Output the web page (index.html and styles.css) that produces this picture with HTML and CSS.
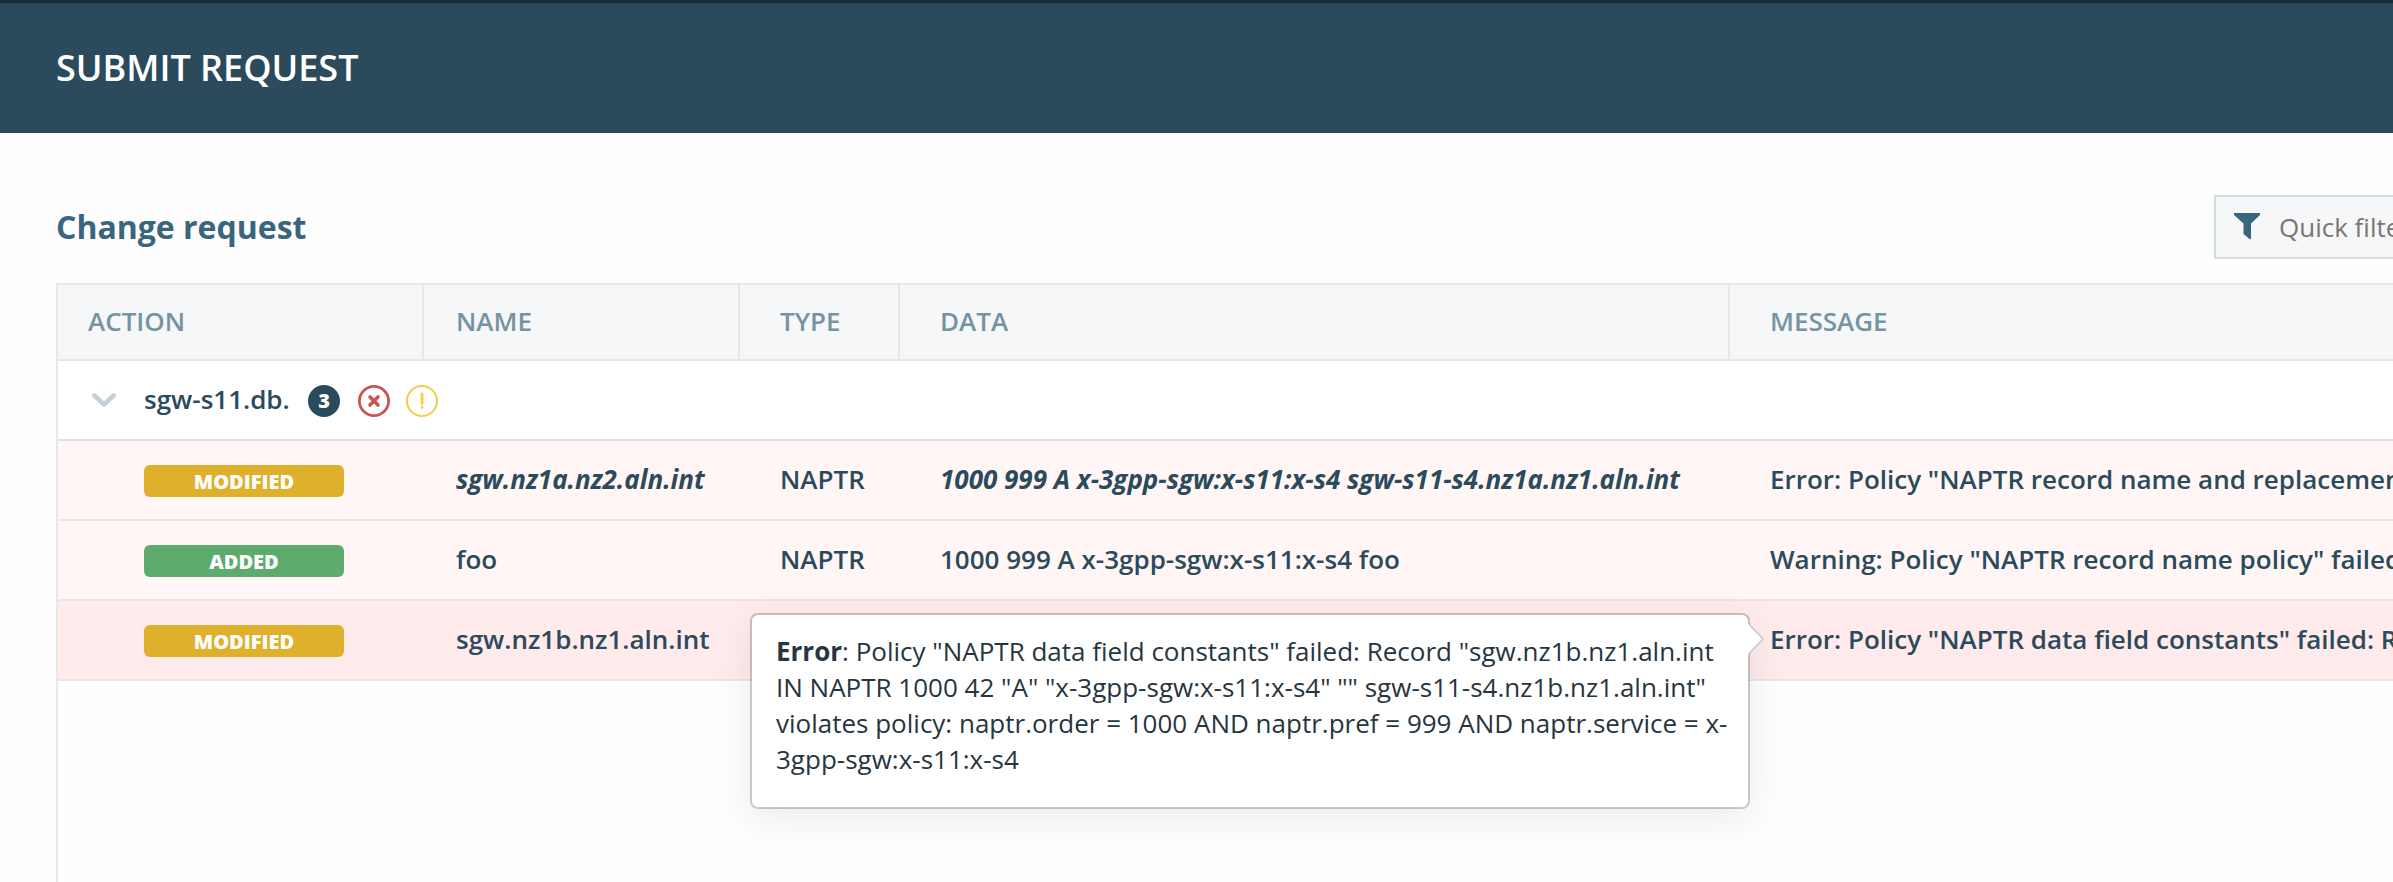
FILE: index.html
```html
<!DOCTYPE html>
<html lang="en">
<head>
<meta charset="utf-8">
<title>Submit request</title>
<link rel="stylesheet" href="styles.css">
</head>
<body>
<header class="topbar"><h1 class="topbar-title">SUBMIT REQUEST</h1></header>
<main class="content">
  <div class="toolbar">
    <h2 class="section-title">Change request</h2>
    <div class="filter">
      <svg class="filter-icon" viewBox="0 0 26 26"><path d="M0 0H26V2L17 10.5V26H15.5L9.5 21V10.5L0 2Z" fill="#3a667d"/></svg>
      <span class="filter-text">Quick filter</span>
    </div>
  </div>
  <div class="table">
    <div class="row head">
      <div class="cell first">ACTION</div><div class="cell name">NAME</div><div class="cell">TYPE</div><div class="cell">DATA</div><div class="cell">MESSAGE</div>
    </div>
    <div class="group">
      <svg class="chevron" viewBox="0 0 24 14"><path d="M2.3 2.5L12 11.5L21.7 2.5" fill="none" stroke="#c3d0d7" stroke-width="4.6" stroke-linecap="round"/></svg>
      <span class="group-name">sgw-s11.db.</span>
      <span class="count">3</span>
      <svg class="status error" viewBox="0 0 32 32" fill="none" stroke="#cc5353"><circle cx="16" cy="16" r="14.6" stroke-width="2.8"/><path d="M12 12L20 20M20 12L12 20" stroke-width="3.6" stroke-linecap="round"/></svg>
      <svg class="status warn" viewBox="0 0 32 32" fill="none" stroke="#f5cb47"><circle cx="16" cy="16" r="15" stroke-width="2"/><path d="M16 9V18.5M16 22.2V22.6" stroke-width="2.8" stroke-linecap="round"/></svg>
    </div>
    <div class="row failed">
      <div class="cell badge-cell"><span class="badge modified">MODIFIED</span></div><div class="cell name changed">sgw.nz1a.nz2.aln.int</div><div class="cell">NAPTR</div><div class="cell changed">1000 999 A x-3gpp-sgw:x-s11:x-s4 sgw-s11-s4.nz1a.nz1.aln.int</div><div class="cell">Error: Policy "NAPTR record name and replacement"</div>
    </div>
    <div class="row failed">
      <div class="cell badge-cell"><span class="badge added">ADDED</span></div><div class="cell name">foo</div><div class="cell">NAPTR</div><div class="cell">1000 999 A x-3gpp-sgw:x-s11:x-s4 foo</div><div class="cell">Warning: Policy "NAPTR record name policy" failed</div>
    </div>
    <div class="row failed hovered">
      <div class="cell badge-cell"><span class="badge modified">MODIFIED</span></div><div class="cell name">sgw.nz1b.nz1.aln.int</div><div class="cell"></div><div class="cell"></div>
      <div class="cell">Error: Policy "NAPTR data field constants" failed: Record</div>
      <div class="tooltip"><b>Error</b>: Policy "NAPTR data field constants" failed: Record "sgw.nz1b.nz1.aln.int<br>IN NAPTR 1000 42 "A" "x-3gpp-sgw:x-s11:x-s4" "" sgw-s11-s4.nz1b.nz1.aln.int"<br>violates policy: naptr.order = 1000 AND naptr.pref = 999 AND naptr.service = x-<br>3gpp-sgw:x-s11:x-s4
        <svg class="arrow" viewBox="0 0 16 30"><path d="M0 0H1L15 15L1 30H0Z" fill="#fff"/><path d="M1 .5L15 15L1 29.5" fill="none" stroke="#000" stroke-opacity=".2" stroke-width="1.5"/></svg>
      </div>
    </div>
  </div>
</main>
</body>
</html>
```

FILE: styles.css
```css
* { box-sizing: border-box; }
body {
  margin: 0;
  height: 882px;
  overflow: hidden;
  display: flex;
  flex-direction: column;
  background: #fefefe;
  color: #2b4a5b;
  font: 600 26px/36px "Open Sans", sans-serif;
}
.topbar {
  height: 133px;
  flex: none;
  display: flex;
  align-items: center;
  padding-left: 56px;
  border-top: 3px solid #1b2b33;
  background: #2b4a5b;
}
.topbar-title { margin: 0; font-size: 36px; font-weight: 600; color: #fff; }
.content { flex: 1; display: flex; flex-direction: column; padding: 62px 0 0 56px; }
.toolbar { height: 64px; display: flex; justify-content: space-between; align-items: center; margin-bottom: 24px; }
.section-title { margin: 0; font-size: 32px; font-weight: 700; color: #3a667d; }
.filter {
  width: 179px;
  height: 64px;
  display: flex;
  align-items: center;
  padding-left: 18px;
  border: 2px solid #d2dce1;
  border-right: 0;
  background: #f5f7f9;
  overflow: hidden;
  white-space: nowrap;
}
.filter-icon { width: 26px; height: 26px; flex: none; margin: 0 19px 2px 0; }
.filter-text { font-weight: 400; color: #777; }
.table { flex: 1; border: solid #e6e8e8; border-width: 2px 0 0 2px; }
.row {
  position: relative;
  display: grid;
  grid-template-columns: 366px 316px 160px 830px 1fr;
  height: 80px;
  border-bottom: 2px solid #e6e8e8;
}
.cell { display: flex; align-items: center; min-width: 0; padding-left: 40px; padding-bottom: 2px; white-space: nowrap; }
.cell.name { padding-left: 32px; }
.head { height: 76px; background: #f5f7f8; color: #7594a3; }
.head .cell { border-right: 2px solid #e6e8e8; }
.head .cell:last-child { border-right: 0; }
.cell.first { padding-left: 30px; }
.group { height: 80px; display: flex; align-items: center; padding-left: 34px; border-bottom: 2px solid #d9e2e7; background: #fff; white-space: nowrap; }
.chevron { width: 24px; height: 14px; margin-right: 28px; }
.group-name { width: 144px; margin-right: 20px; padding-bottom: 2px; }
.count {
  width: 32px;
  height: 32px;
  margin-top: 1px;
  border-radius: 50%;
  background: #2b4a5b;
  color: #fff;
  font: 800 20px/32px "Open Sans", sans-serif;
  text-align: center;
}
.status { width: 32px; height: 32px; margin: 1px 0 0 18px; }
.status.warn { margin-left: 16px; }
.failed { background: #fff6f5; }
.hovered { background: #ffebeb; }
.changed { font-weight: 700; font-style: italic; }
.cell.badge-cell { padding: 2px 0 0 86px; }
.badge { width: 200px; height: 32px; border-radius: 6px; color: #fff; font: 800 20px/33px "Open Sans", sans-serif; text-align: center; }
.badge.modified { background: #deb02b; }
.badge.added { background: #5dac6e; }
.tooltip {
  position: absolute;
  left: 692px;
  top: 12px;
  width: 1000px;
  height: 196px;
  padding: 18px 24px;
  border: 2px solid rgba(0, 0, 0, .2);
  border-radius: 8px;
  background: #fff;
  background-clip: padding-box;
  box-shadow: 0 10px 40px rgba(0, 0, 0, .08);
  color: #263540;
  font-weight: 400;
  white-space: nowrap;
}
.arrow { position: absolute; left: 996px; top: 9px; width: 16px; height: 30px; }
```
